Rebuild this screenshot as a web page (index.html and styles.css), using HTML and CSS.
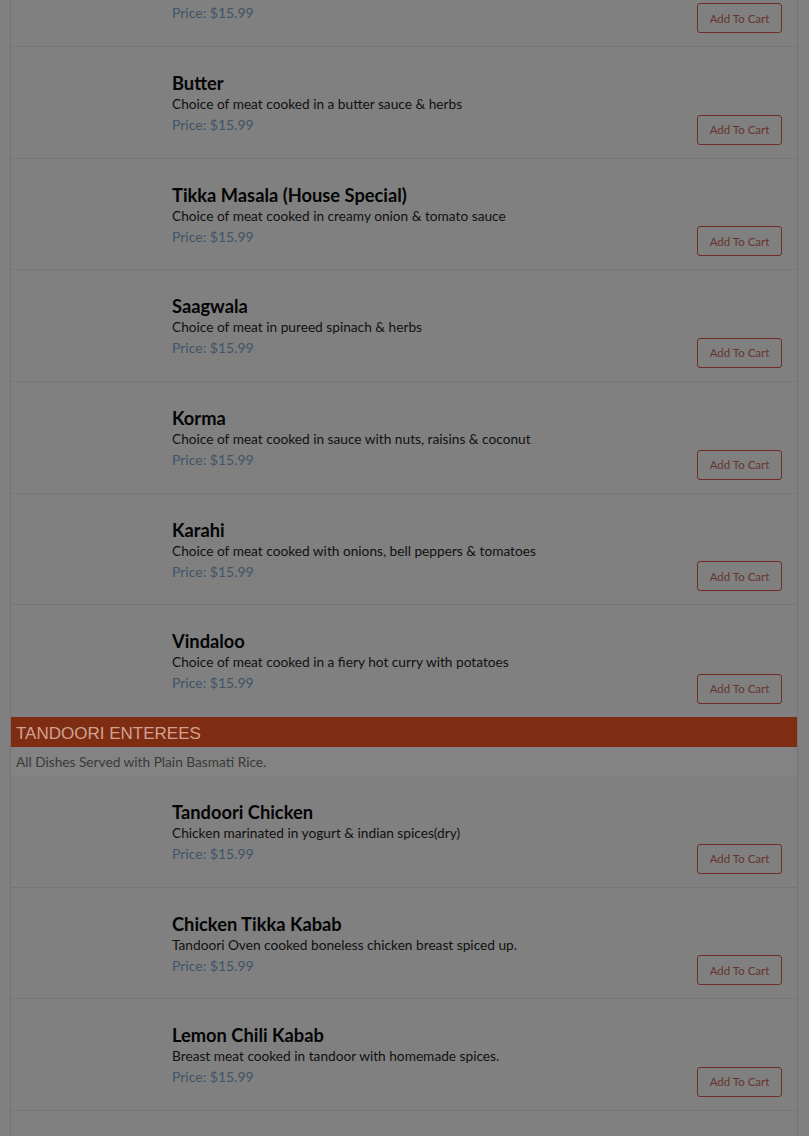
FILE: index.html
```html
<!DOCTYPE html>
<html>
<head>
<meta charset="utf-8">
<link rel="stylesheet" href="styles.css">
</head>
<body>
<div class="menu">
  <div class="row partial">
    <div class="thumb"></div>
    <div class="info"><div class="price">Price: $15.99</div></div>
    <div class="actions"><button class="cart">Add To Cart</button></div>
  </div>
  <div class="row">
    <div class="thumb"></div>
    <div class="info"><div class="name">Butter</div><div class="desc">Choice of meat cooked in a butter sauce &amp; herbs</div><div class="price">Price: $15.99</div></div>
    <div class="actions"><button class="cart">Add To Cart</button></div>
  </div>
  <div class="row">
    <div class="thumb"></div>
    <div class="info"><div class="name">Tikka Masala (House Special)</div><div class="desc">Choice of meat cooked in creamy onion &amp; tomato sauce</div><div class="price">Price: $15.99</div></div>
    <div class="actions"><button class="cart">Add To Cart</button></div>
  </div>
  <div class="row">
    <div class="thumb"></div>
    <div class="info"><div class="name">Saagwala</div><div class="desc">Choice of meat in pureed spinach &amp; herbs</div><div class="price">Price: $15.99</div></div>
    <div class="actions"><button class="cart">Add To Cart</button></div>
  </div>
  <div class="row">
    <div class="thumb"></div>
    <div class="info"><div class="name">Korma</div><div class="desc">Choice of meat cooked in sauce with nuts, raisins &amp; coconut</div><div class="price">Price: $15.99</div></div>
    <div class="actions"><button class="cart">Add To Cart</button></div>
  </div>
  <div class="row">
    <div class="thumb"></div>
    <div class="info"><div class="name">Karahi</div><div class="desc">Choice of meat cooked with onions, bell peppers &amp; tomatoes</div><div class="price">Price: $15.99</div></div>
    <div class="actions"><button class="cart">Add To Cart</button></div>
  </div>
  <div class="row last">
    <div class="thumb"></div>
    <div class="info"><div class="name">Vindaloo</div><div class="desc">Choice of meat cooked in a fiery hot curry with potatoes</div><div class="price">Price: $15.99</div></div>
    <div class="actions"><button class="cart">Add To Cart</button></div>
  </div>
  <div class="cat-head">TANDOORI ENTEREES</div>
  <div class="cat-note">All Dishes Served with Plain Basmati Rice.</div>
  <div class="row">
    <div class="thumb"></div>
    <div class="info"><div class="name">Tandoori Chicken</div><div class="desc">Chicken marinated in yogurt &amp; indian spices(dry)</div><div class="price">Price: $15.99</div></div>
    <div class="actions"><button class="cart">Add To Cart</button></div>
  </div>
  <div class="row">
    <div class="thumb"></div>
    <div class="info"><div class="name">Chicken Tikka Kabab</div><div class="desc">Tandoori Oven cooked boneless chicken breast spiced up.</div><div class="price">Price: $15.99</div></div>
    <div class="actions"><button class="cart">Add To Cart</button></div>
  </div>
  <div class="row">
    <div class="thumb"></div>
    <div class="info"><div class="name">Lemon Chili Kabab</div><div class="desc">Breast meat cooked in tandoor with homemade spices.</div><div class="price">Price: $15.99</div></div>
    <div class="actions"><button class="cart">Add To Cart</button></div>
  </div>
  <div class="row"></div>
</div>
</body>
</html>
```

FILE: styles.css
```css
html, body {
  margin: 0;
  padding: 0;
  background: #808080;
}
body {
  font-family: Lato, "Noto Sans", sans-serif;
  color: #0d0d0d;
  overflow: hidden;
  height: 1136px;
}
.menu {
  margin: 0 11px 0 10px;
  border-left: 1px solid #747474;
  border-right: 1px solid #747474;
  background: #808080;
}
.row {
  display: flex;
  height: 110.67px;
  border-bottom: 1px solid #767676;
}
.row.partial {
  height: 46px;
}
.row.partial .info {
  padding-top: 2px;
}
.row.last {
  border-bottom: none;
  height: 111.67px;
}
.thumb {
  width: 161px;
  flex: none;
}
.info {
  flex: 1;
  padding-top: 25px;
}
.name {
  font-size: 18.3px;
  font-weight: 700;
  line-height: 22px;
  color: #050505;
}
.desc {
  font-size: 13.7px;
  line-height: 20px;
  color: #111;
}
.price {
  font-size: 14px;
  line-height: 21px;
  color: #415468;
}
.actions {
  align-self: flex-end;
  padding: 0 15px 13px 0;
}
.cart {
  display: block;
  width: 85px;
  height: 30px;
  border: 1px solid #722e24;
  border-radius: 3px;
  background: #808080;
  color: #66342c;
  font-family: Lato, "Noto Sans", sans-serif;
  font-size: 11.5px;
  padding: 0;
}
.cat-head {
  background: #7f2d12;
  color: #cfa291;
  font-family: "Liberation Sans", Arial, sans-serif;
  font-size: 17px;
  line-height: 30px;
  height: 30px;
  padding: 2px 0 0 5px;
  box-sizing: border-box;
}
.cat-note {
  background: #838383;
  color: #3a3a3a;
  font-size: 13.7px;
  line-height: 29px;
  height: 29px;
  padding-left: 5px;
}
```
